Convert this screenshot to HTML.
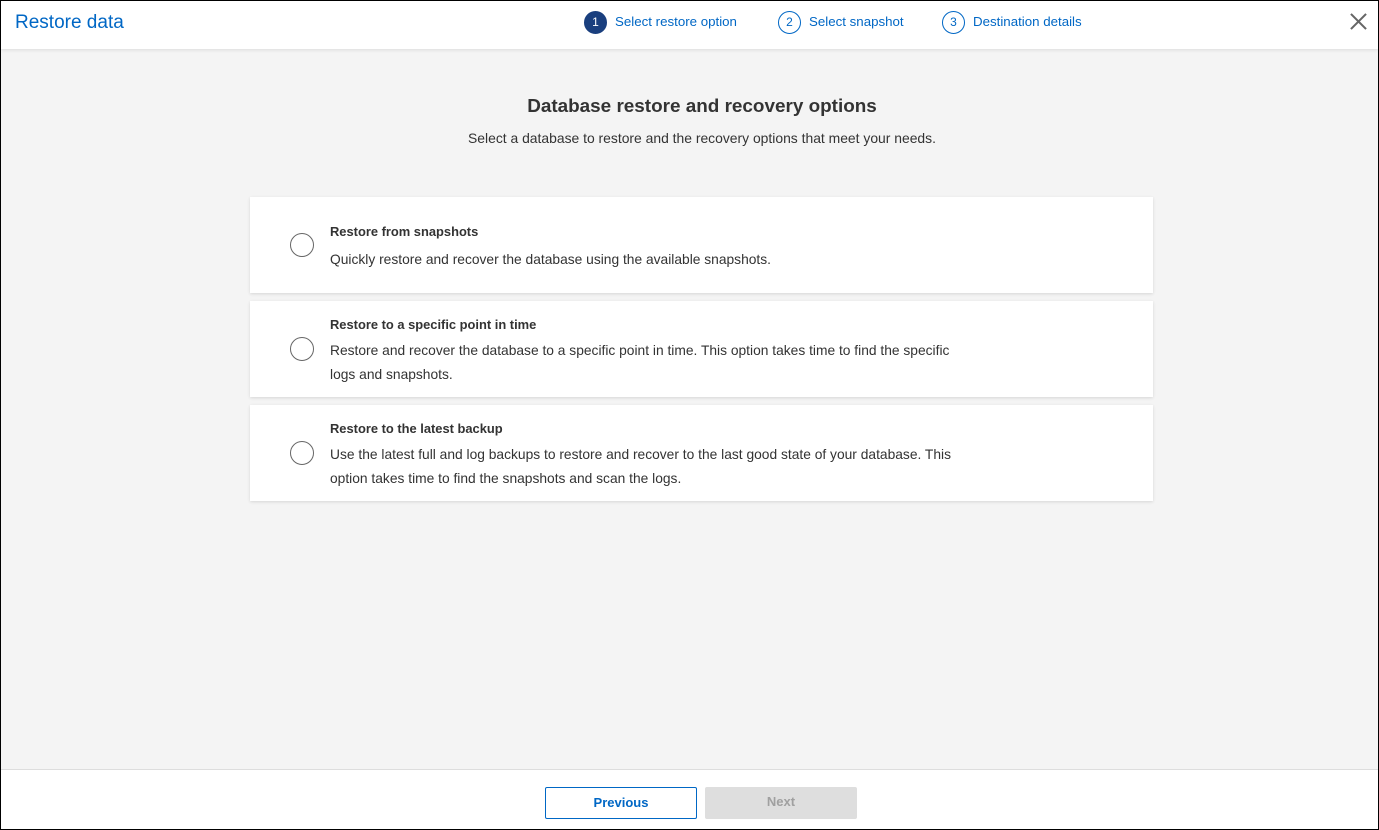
<!DOCTYPE html>
<html><head><style>
*{box-sizing:border-box;margin:0;padding:0}
body{width:1379px;height:830px;font-family:"Liberation Sans",sans-serif;background:#fff;overflow:hidden}
.frame{position:absolute;left:0;top:0;width:1379px;height:830px;border:1px solid #000;background:#f4f4f4}
.hdr{position:absolute;left:0;top:0;width:1377px;height:48px;background:#fff;box-shadow:0 1px 4px rgba(0,0,0,.1)}
.title{position:absolute;left:14px;top:11px;font-size:19px;color:#0067c5}
.step{position:absolute;top:10px;font-size:13.3px;color:#0067c5;line-height:22px}
.step i{display:inline-block;width:23px;height:23px;border:1px solid #0067c5;border-radius:50%;text-align:center;font-style:normal;font-size:12px;line-height:21px;margin-right:8px;vertical-align:middle}
.step i.on{background:#1a3f7e;border-color:#1a3f7e;color:#fff}
.x{position:absolute;left:1349px;top:12px}
h1{position:absolute;left:0;width:1402px;top:95px;text-align:center;font-size:18.9px;font-weight:bold;color:#333}
.sub{position:absolute;left:0;width:1402px;top:129px;text-align:center;font-size:13.9px;color:#333}
.card{position:absolute;left:249px;width:903px;height:96px;background:#fff;box-shadow:0 1px 3px rgba(0,0,0,.12)}
.rad{position:absolute;left:40px;top:36px;width:24px;height:24px;border:1px solid #666;border-radius:50%}
.ct{position:absolute;left:80px;top:27px;font-size:12.9px;font-weight:bold;color:#333}
.cd{position:absolute;left:80px;top:54px;font-size:13.8px;color:#333;line-height:24px;width:640px}
.ftr{position:absolute;left:0;top:768px;width:1377px;height:60px;background:#fff;border-top:1px solid #ddd}
.btn{position:absolute;top:17px;width:152px;height:32px;font-size:13px;font-weight:bold;text-align:center;line-height:30px}
</style></head><body>
<div class="frame">
<div class="hdr">
<div class="title">Restore data</div>
<div class="step" style="left:583px"><i class="on">1</i>Select restore option</div>
<div class="step" style="left:777px"><i>2</i>Select snapshot</div>
<div class="step" style="left:941px"><i>3</i>Destination details</div>
<svg class="x" width="17" height="17" viewBox="0 0 18 18"><path d="M1 1L17 17M17 1L1 17" stroke="#666" stroke-width="2.2"/></svg>
</div>
<h1>Database restore and recovery options</h1>
<div class="sub">Select a database to restore and the recovery options that meet your needs.</div>
<div class="card" style="top:196px"><div class="rad"></div><div class="ct">Restore from snapshots</div><div class="cd" style="top:51px">Quickly restore and recover the database using the available snapshots.</div></div>
<div class="card" style="top:300px"><div class="rad"></div><div class="ct" style="top:16px">Restore to a specific point in time</div><div class="cd" style="top:38px;width:640px">Restore and recover the database to a specific point in time. This option takes time to find the specific logs and snapshots.</div></div>
<div class="card" style="top:404px"><div class="rad"></div><div class="ct" style="top:16px">Restore to the latest backup</div><div class="cd" style="top:38px;width:640px">Use the latest full and log backups to restore and recover to the last good state of your database. This option takes time to find the snapshots and scan the logs.</div></div>
<div class="ftr">
<div class="btn" style="left:544px;border:1px solid #0067c5;color:#0067c5;border-radius:2px">Previous</div>
<div class="btn" style="left:704px;background:#dedede;color:#a0a0a0;border-radius:2px">Next</div>
</div>
</div>
</body></html>
